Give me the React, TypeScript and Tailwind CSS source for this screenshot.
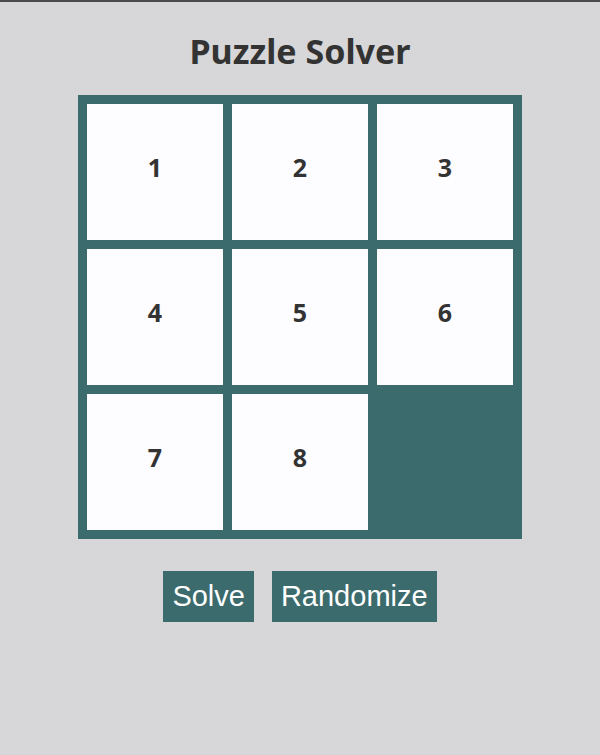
export default function App() {
  const tiles = [1, 2, 3, 4, 5, 6, 7, 8, 0]

  return (
    <div className="min-h-[755px] bg-[#d7d6d8] border-t-2 border-[#4a4a4a] flex flex-col items-center">
      <h1 className="mt-[26px] text-[34px] leading-[46px] font-bold text-[#333333] font-['Noto_Sans',sans-serif]">
        Puzzle Solver
      </h1>
      <div className="mt-[21px] bg-[#3b6b6c] p-[9px] grid grid-cols-3 gap-[9px]">
        {tiles.map((n) =>
          n === 0 ? (
            <div key={n} className="w-[136px] h-[136px]" />
          ) : (
            <div
              key={n}
              className="w-[136px] h-[136px] pb-[8px] bg-[#fdfcfe] flex items-center justify-center text-[25px] font-bold text-[#333333] font-['Noto_Sans',sans-serif]"
            >
              {n}
            </div>
          )
        )}
      </div>
      <div className="mt-[32px] flex gap-[18px]">
        <button className="h-[51px] px-[9px] bg-[#3b6b6c] text-white text-[29px] font-['Liberation_Sans',Arial,sans-serif]">
          Solve
        </button>
        <button className="h-[51px] px-[9px] bg-[#3b6b6c] text-white text-[29px] font-['Liberation_Sans',Arial,sans-serif]">
          Randomize
        </button>
      </div>
    </div>
  )
}
